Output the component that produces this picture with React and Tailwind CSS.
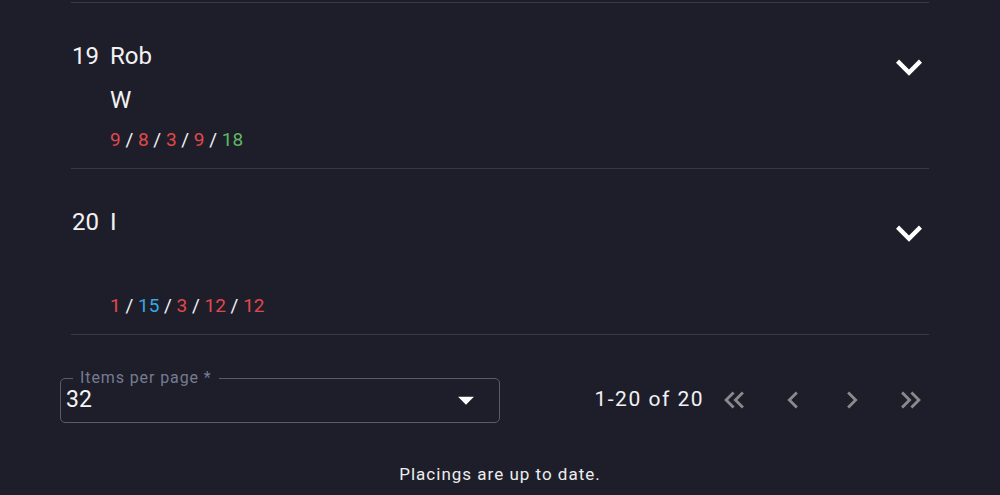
const rows = [
  {
    rank: 19,
    name: 'Rob',
    sub: 'W',
    scores: [
      { v: 9, c: 'text-[#e0484a]' },
      { v: 8, c: 'text-[#e0484a]' },
      { v: 3, c: 'text-[#e0484a]' },
      { v: 9, c: 'text-[#e0484a]' },
      { v: 18, c: 'text-[#5cb860]' },
    ],
  },
  {
    rank: 20,
    name: 'I',
    sub: '',
    scores: [
      { v: 1, c: 'text-[#e0484a]' },
      { v: 15, c: 'text-[#35a8e0]' },
      { v: 3, c: 'text-[#e0484a]' },
      { v: 12, c: 'text-[#e0484a]' },
      { v: 12, c: 'text-[#e0484a]' },
    ],
  },
]

const ExpandIcon = () => (
  <svg viewBox="0 0 24 24" className="w-[52px] h-[52px]" fill="#ffffff">
    <path d="M16.59 8.59L12 13.17 7.41 8.59 6 10l6 6 6-6z" />
  </svg>
)

const PagerIcon = ({ d }) => (
  <button className="w-[48px] h-[48px] flex items-center justify-center">
    <svg viewBox="0 0 24 24" className="w-[34px] h-[34px]" fill="#8a8a8e">
      <path d={d} />
    </svg>
  </button>
)

const Row = ({ row }) => (
  <div className="flex border-b border-[#383946] pt-[37px] pb-[16px]">
    <div className="w-[39px] pl-px text-[24px] leading-[32px] text-[#f2f2f2]">{row.rank}</div>
    <div className="flex-1 flex flex-col">
      <div className="text-[24px] leading-[32px] text-[#f2f2f2]">{row.name}</div>
      <div className="mt-[12px] h-[32px] text-[24px] leading-[32px] text-[#f2f2f2]">{row.sub}</div>
      <div className="mt-[12px] text-[19px] leading-[24px]">
        {row.scores.map((s, i) => (
          <span key={i}>
            {i > 0 && <span className="text-[#f2f2f2]"> / </span>}
            <span className={s.c}>{s.v}</span>
          </span>
        ))}
      </div>
    </div>
    <div className="mt-[1px] mr-[-6px]">
      <ExpandIcon />
    </div>
  </div>
)

export default function App() {
  return (
    <div className="min-h-[495px] bg-[#1e1e2b] font-['Roboto',sans-serif] overflow-hidden">
      <div className="ml-[71px] w-[858px] border-t border-[#383946] mt-[2px]">
        {rows.map(r => (
          <Row key={r.rank} row={r} />
        ))}
      </div>

      <div className="ml-[60px] w-[875px] mt-[41px] flex items-center justify-between">
        <div className="relative w-[440px] h-[45px] border border-[#595c6a] rounded-[5px] flex items-center">
          <span className="absolute left-[12px] top-[-11px] px-[7px] bg-[#1e1e2b] text-[16px] leading-[20px] tracking-[0.9px] text-[#767b8f]">
            Items per page *
          </span>
          <span className="pl-[5px] text-[23px] text-[#f5f5f5] flex-1">32</span>
          <svg viewBox="0 0 24 24" className="w-[38px] h-[38px] mr-[14px]" fill="#ffffff">
            <path d="M7 10l5 5 5-5z" />
          </svg>
        </div>

        <div className="flex items-center">
          <span className="text-[21px] tracking-[1.5px] text-[#f2f2f2] mr-[6px]">1-20 of 20</span>
          <div className="flex gap-[11px]">
            <PagerIcon d="M17.59 18L19 16.59 14.42 12 19 7.41 17.59 6l-6 6zM11 18l1.41-1.41L7.83 12l4.58-4.59L11 6l-6 6z" />
            <PagerIcon d="M15.41 7.41L14 6l-6 6 6 6 1.41-1.41L10.83 12z" />
            <PagerIcon d="M10 6L8.59 7.41 13.17 12l-4.58 4.59L10 18l6-6z" />
            <PagerIcon d="M6.41 6L5 7.41 9.58 12 5 16.59 6.41 18l6-6zM13 6l-1.41 1.41L16.17 12l-4.58 4.59L13 18l6-6z" />
          </div>
        </div>
      </div>

      <div className="mt-[38px] text-center text-[17px] tracking-[1px] text-[#ededed]">Placings are up to date.</div>
    </div>
  )
}
